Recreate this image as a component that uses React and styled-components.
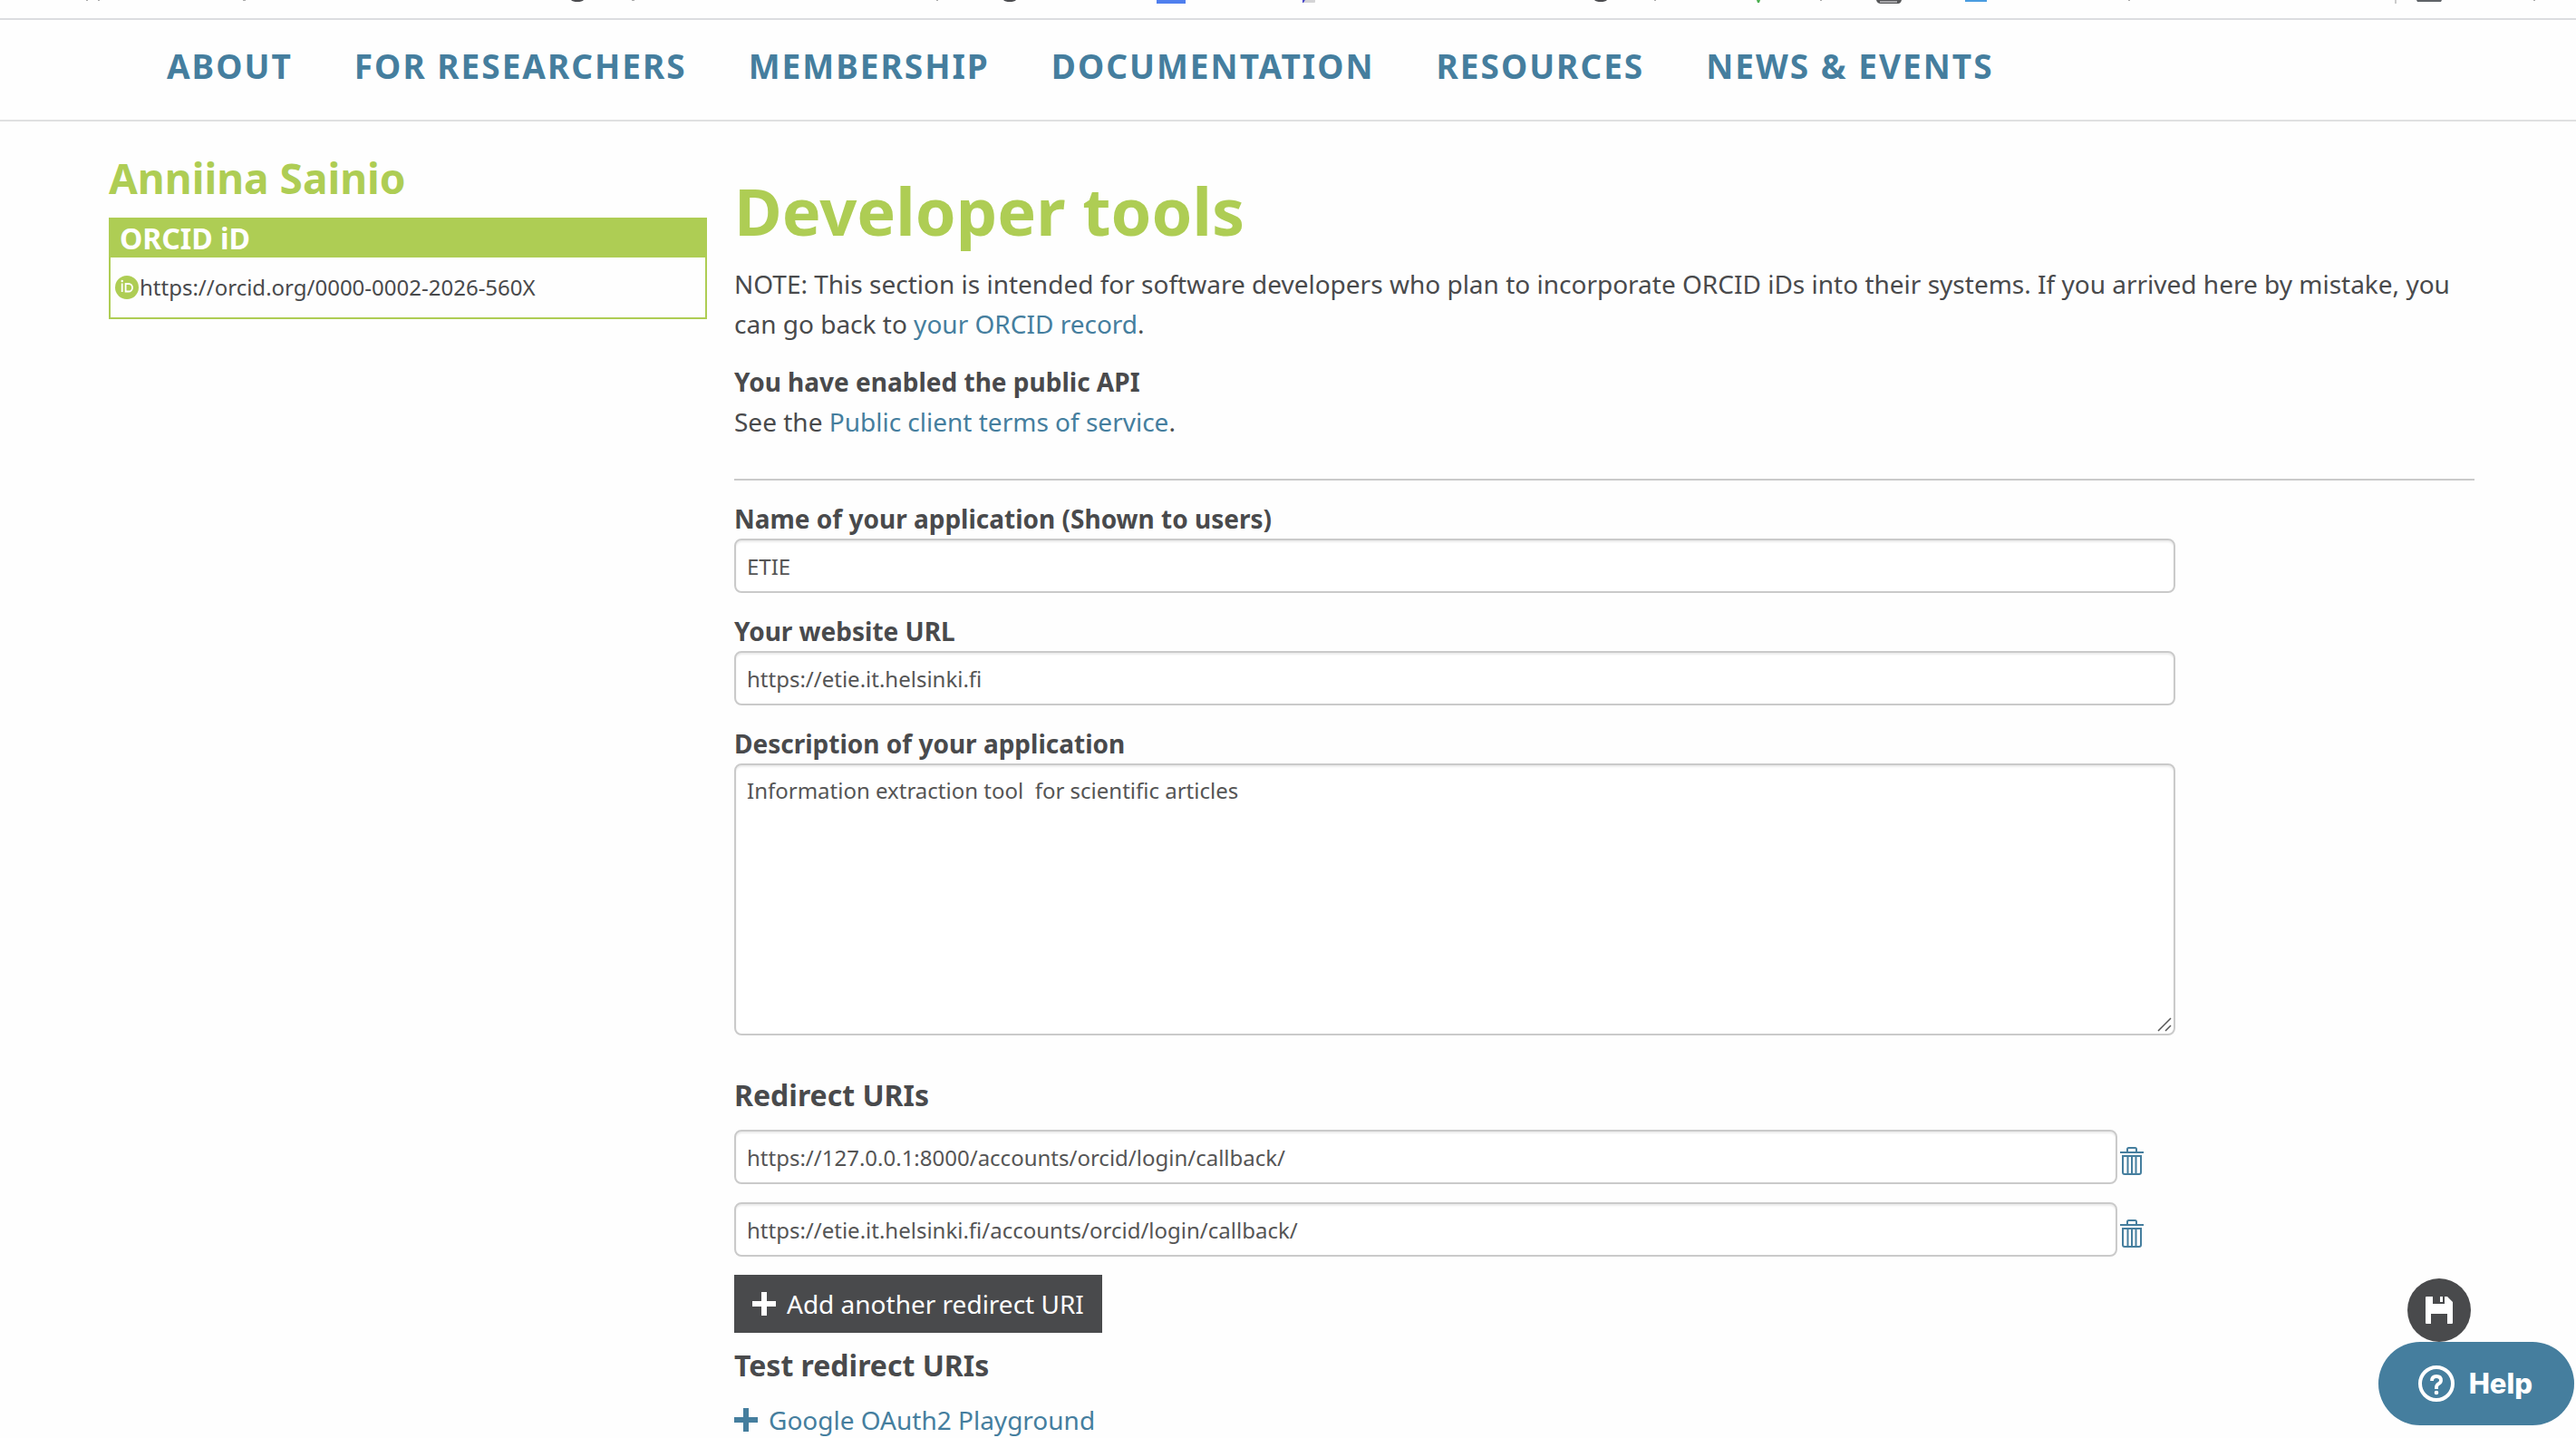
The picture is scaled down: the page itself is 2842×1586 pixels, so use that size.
import React, { useId, useState } from "react";
import styled, { createGlobalStyle } from "styled-components";

const GREEN = "#aecd54";
const BLUE = "#457e9e";
const INK = "#494a4c";

const GlobalStyle = createGlobalStyle`
  * { box-sizing: border-box; }
  body {
    margin: 0;
    background: #fefefe;
    color: ${INK};
    font-family: "Noto Sans", sans-serif;
    font-size: 28px;
    line-height: 44px;
  }
  h1, h2, h3, p { margin: 0; }
  a { color: ${BLUE}; text-decoration: none; }
`;

const Page = styled.div`
  min-height: 100vh;
  overflow: hidden;
`;

const BookmarksBar = styled.div`
  height: 22px;
  border-bottom: 2px solid #dcdde0;
`;

const BookmarksSvg = styled.svg`
  display: block;
  width: 100%;
  height: 6px;
`;

const Nav = styled.nav`
  display: flex;
  gap: 68px;
  padding: 26px 184px 34px;
  border-bottom: 2px solid #dfe0e1;
`;

const NavLink = styled.a`
  font-size: 37px;
  font-weight: 700;
  line-height: 50px;
  letter-spacing: 2px;
  text-transform: uppercase;
`;

const Layout = styled.div`
  display: grid;
  grid-template-columns: 660px minmax(0, 1fr);
  gap: 30px;
  padding: 30px 112px 0 120px;
`;

const Side = styled.aside`
  display: flex;
  flex-direction: column;
`;

const OwnerName = styled.h2`
  color: ${GREEN};
  font-size: 46px;
  line-height: 64px;
  margin-bottom: 12px;
`;

const IdBox = styled.section`
  border: 2px solid ${GREEN};
`;

const IdHead = styled.h3`
  background: ${GREEN};
  color: #fff;
  font-size: 32px;
  line-height: 42px;
  padding: 0 10px;
`;

const IdBody = styled.div`
  display: flex;
  align-items: center;
  gap: 1px;
  padding: 15px 5px;
  font-size: 24px;
  line-height: 36px;
`;

const Main = styled.main`
  padding-top: 19px;
`;

const Title = styled.h1`
  color: ${GREEN};
  font-size: 72px;
  line-height: 98px;
  margin-bottom: 10px;
`;

const Paragraph = styled.p`
  margin-bottom: 20px;
`;

const Rule = styled.hr`
  border: 0;
  height: 2px;
  background: #cacaca;
  margin: 41px 0 20px;
`;

const Form = styled.form`
  display: flex;
  flex-direction: column;
  align-items: flex-start;
  width: 100%;
`;

const Field = styled.div`
  display: flex;
  flex-direction: column;
  width: 1590px;
  max-width: 100%;
  margin-bottom: 20px;
`;

const Label = styled.label`
  font-weight: 700;
`;

const Input = styled.input`
  width: 100%;
  height: 60px;
  padding: 0 12px;
  border: 2px solid #cacaca;
  border-radius: 8px;
  background: #fff;
  color: #555;
  font: inherit;
  font-size: 24px;
  box-shadow: inset 0 2px 2px rgba(0, 0, 0, 0.08);
`;

const AreaWrap = styled.div`
  position: relative;
  display: flex;
`;

const TextArea = styled.textarea`
  width: 100%;
  height: 300px;
  padding: 8px 12px;
  border: 2px solid #cacaca;
  border-radius: 8px;
  background: #fff;
  color: #555;
  font: inherit;
  font-size: 24px;
  line-height: 40px;
  resize: none;
  box-shadow: inset 0 2px 2px rgba(0, 0, 0, 0.08);
`;

const Grip = styled.svg`
  position: absolute;
  right: 4px;
  bottom: 4px;
`;

const SectionTitle = styled.h3`
  font-size: 32px;
  line-height: 44px;
  margin: ${(p) => p.$top}px 0 ${(p) => p.$bottom}px;
`;

const UriRow = styled.div`
  display: flex;
  align-items: center;
  gap: 3px;
  width: 1555px;
  max-width: 100%;
  margin-bottom: 20px;
`;

const IconButton = styled.button`
  flex: none;
  display: flex;
  padding: 9px 0 0;
  border: 0;
  background: none;
  color: ${BLUE};
`;

const AddButton = styled.button`
  display: flex;
  align-items: center;
  gap: 12px;
  height: 64px;
  padding: 0 20px;
  border: 0;
  background: ${INK};
  color: #fff;
  font: inherit;
`;

const PlusLink = styled.a`
  display: flex;
  align-items: center;
  gap: 12px;
`;

const Floating = styled.div`
  position: fixed;
  right: 2px;
  bottom: 14px;
  display: flex;
  flex-direction: column;
  align-items: flex-end;
`;

const SaveButton = styled.button`
  display: grid;
  place-items: center;
  width: 70px;
  height: 70px;
  margin-right: 114px;
  padding: 0;
  border: 0;
  border-radius: 50%;
  background: ${INK};
  color: #fff;
`;

const HelpButton = styled.button`
  display: flex;
  align-items: center;
  gap: 16px;
  height: 92px;
  padding: 0 46px 0 44px;
  border: 0;
  border-radius: 46px;
  background: ${BLUE};
  color: #fff;
  font: 800 31px/44px Inter, sans-serif;
`;

const BookmarkMarks = () => (
  <BookmarksSvg viewBox="0 0 2842 6" preserveAspectRatio="xMinYMin slice" aria-hidden="true">
    <path d="M95 0h2v1h-2zM108 0h2v1h-2zM268 0h3v1h-3zM697 0h3v1h-3zM1033 0h2v1h-2zM1825 0h2v1h-2zM2008 0h2v1h-2zM2348 0h2v1h-2zM2795 0h2v1h-2z" fill="#aaa" />
    <path d="M630 0h14q-2 2-7 2t-7-2zM1107 0h14q-2 2-7 2t-7-2zM1759 0h14q-2 2-7 2t-7-2z" fill="#4b4c4f" />
    <path d="M1276 0h32v4h-32z" fill="#4f7fee" />
    <path d="M1440 0h11v2q0 1-1 1h-12z" fill="#d4d4d6" />
    <path d="M1437 0h3l-2 3h-1z" fill="#4a48c8" />
    <path d="M1938 0h4l-1 3h-2z" fill="#4caf50" />
    <path d="M2070 0h28q-1 4-4 4h-19q-4 0-5-4z" fill="#555658" />
    <path d="M2074 1h19v2h-19z" fill="#a5a5a8" />
    <path d="M2168 0h24v2h-24z" fill="#4a9de0" />
    <path d="M2642 0h2v4h-2z" fill="#ccc" />
    <path d="M2666 0h28l-1 2h-26z" fill="#5f6368" />
  </BookmarksSvg>
);

const OrcidIcon = () => (
  <svg width="26" height="26" viewBox="0 0 26 26" aria-hidden="true">
    <circle cx="13" cy="13" r="13" fill={GREEN} />
    <path d="M7.700 8.500v9.500M11.600 9v8.500h3.200a4.250 4.250 0 0 0 0-8.500z" fill="none" stroke="#fff" strokeWidth="1.800" />
    <circle cx="7.700" cy="6" r="1.200" fill="#fff" />
  </svg>
);

const TrashIcon = () => (
  <svg width="26" height="31" viewBox="0 0 26 31" aria-hidden="true">
    <g fill="none" stroke="currentColor" strokeWidth="2">
      <path d="M0 6h26M8 6V2.500Q8 1 9.500 1h7Q18 1 18 2.500V6" />
      <path d="M3 10h20v18q0 2-2 2H5q-2 0-2-2zM8.500 10v20M13 10v20M17.500 10v20" />
    </g>
  </svg>
);

const PlusIcon = () => (
  <svg width="26" height="26" viewBox="0 0 26 26" aria-hidden="true">
    <path d="M10 0h6v10h10v6H16v10h-6V16H0v-6h10z" fill="currentColor" />
  </svg>
);

const SaveIcon = () => (
  <svg width="30" height="30" viewBox="0 0 30 30" aria-hidden="true">
    <path d="M1 0h7v8h13V0h3l6 6v23q0 1-1 1h-5V19H6v11H1q-1 0-1-1V1q0-1 1-1zM16 0h3v6h-3z" fill="currentColor" />
  </svg>
);

const HelpIcon = () => (
  <svg width="40" height="40" viewBox="0 0 40 40" aria-hidden="true">
    <circle cx="20" cy="20" r="18" fill="none" stroke="currentColor" strokeWidth="4" />
    <path d="M15 17q0-5 5-5t5 4.500q0 2.200-2.500 3.700T20 24v2" fill="none" stroke="currentColor" strokeWidth="3.800" />
    <circle cx="20" cy="30" r="2.300" fill="currentColor" />
  </svg>
);

const NAV = ["About", "For researchers", "Membership", "Documentation", "Resources", "News & events"];

function TextField({ label, initial }) {
  const id = useId();
  const [value, setValue] = useState(initial);
  return (
    <Field>
      <Label htmlFor={id}>{label}</Label>
      <Input id={id} type="text" value={value} onChange={(e) => setValue(e.target.value)} />
    </Field>
  );
}

function RedirectRow({ initial }) {
  const [value, setValue] = useState(initial);
  return (
    <UriRow>
      <Input type="text" aria-label="Redirect URI" value={value} onChange={(e) => setValue(e.target.value)} />
      <IconButton type="button" aria-label="Delete redirect URI">
        <TrashIcon />
      </IconButton>
    </UriRow>
  );
}

export default function App() {
  return (
    <Page>
      <GlobalStyle />
      <BookmarksBar>
        <BookmarkMarks />
      </BookmarksBar>
      <Nav>
        {NAV.map((item) => (
          <NavLink key={item} href="#">{item}</NavLink>
        ))}
      </Nav>
      <Layout>
        <Side>
          <OwnerName>Anniina Sainio</OwnerName>
          <IdBox>
            <IdHead>ORCID iD</IdHead>
            <IdBody>
              <OrcidIcon />
              <span>https://orcid.org/0000-0002-2026-560X</span>
            </IdBody>
          </IdBox>
        </Side>
        <Main>
          <Title>Developer tools</Title>
          <Paragraph>
            NOTE: This section is intended for software developers who plan to incorporate ORCID iDs into their
            systems. If you arrived here by mistake, you can go back to <a href="#">your ORCID record</a>.
          </Paragraph>
          <Paragraph>
            <strong>You have enabled the public API</strong>
            <br />
            See the <a href="#">Public client terms of service</a>.
          </Paragraph>
          <Rule />
          <Form onSubmit={(e) => e.preventDefault()}>
            <TextField label="Name of your application (Shown to users)" initial="ETIE" />
            <TextField label="Your website URL" initial="https://etie.it.helsinki.fi" />
            <Field>
              <Label htmlFor="description">Description of your application</Label>
              <AreaWrap>
                <TextArea id="description" defaultValue="Information extraction tool  for scientific articles" />
                <Grip width="16" height="16" viewBox="0 0 16 16" aria-hidden="true">
                  <path d="M1 15L15 1M9 15l6-6" stroke="#555" strokeWidth="1.500" />
                </Grip>
              </AreaWrap>
            </Field>
            <SectionTitle $top={24} $bottom={16}>Redirect URIs</SectionTitle>
            <RedirectRow initial="https://127.0.0.1:8000/accounts/orcid/login/callback/" />
            <RedirectRow initial="https://etie.it.helsinki.fi/accounts/orcid/login/callback/" />
            <AddButton type="button">
              <PlusIcon />
              Add another redirect URI
            </AddButton>
            <SectionTitle $top={14} $bottom={16}>Test redirect URIs</SectionTitle>
            <PlusLink href="#">
              <PlusIcon />
              Google OAuth2 Playground
            </PlusLink>
          </Form>
        </Main>
      </Layout>
      <Floating>
        <SaveButton type="button" aria-label="Save">
          <SaveIcon />
        </SaveButton>
        <HelpButton type="button">
          <HelpIcon />
          Help
        </HelpButton>
      </Floating>
    </Page>
  );
}
